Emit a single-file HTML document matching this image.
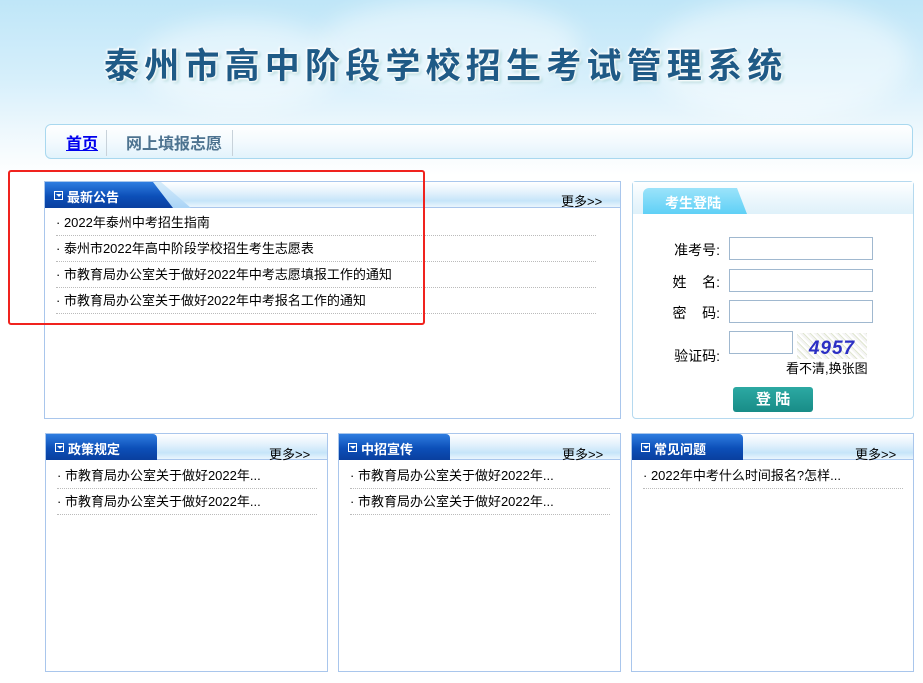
<!DOCTYPE html>
<html><head><meta charset="utf-8"><style>
*{margin:0;padding:0;box-sizing:border-box}
body{width:923px;height:683px;position:relative;overflow:hidden;background:#fff;font-family:"Liberation Sans","Noto Sans CJK SC",sans-serif;font-size:13px;color:#000}
.a{position:absolute}
#hd{left:0;top:0;width:923px;height:175px;background:linear-gradient(180deg,#bfe6f8 0%,#d6effb 45%,#eef8fd 75%,#fff 100%)}
.cl{border-radius:50%;background:rgba(255,255,255,.45);filter:blur(12px)}
#title{left:104px;top:38px;width:700px;font-size:35px;font-weight:bold;color:#1f5a86;letter-spacing:5.2px;white-space:nowrap;text-shadow:0 0 2px #fff,0 0 3px #fff,1px 1px 2px #fff,-1px -1px 2px #fff,2px 2px 3px #9cc}
#nav{left:45px;top:124px;width:868px;height:35px;border:1px solid #a9d8ef;border-radius:6px;background:linear-gradient(180deg,#fff 0%,#f3fafe 50%,#e2f3fc 100%)}
.panel{border:1px solid #a9c6ec;background:#fff}
.ph{left:0;top:0;right:0;height:26px;background:linear-gradient(180deg,#fff 0%,#e4f2fc 40%,#c6e5f9 75%,#eaf6fd 100%);border-bottom:1px solid #a9c6ec}
.tab{left:0;top:0;height:26px;background:linear-gradient(180deg,#2f7de0 0%,#0c4fb8 55%,#0a3f9e 100%);color:#fff;font-weight:bold;font-size:13px;line-height:32px;padding-left:22px}
.tab i{position:absolute;left:9px;top:9px;width:9px;height:9px;border:1px solid #fff;font-style:normal}
.tab i:after{content:"";position:absolute;left:1px;top:2px;border-left:3px solid transparent;border-right:3px solid transparent;border-top:3px solid #fff}
.more{top:9px;font-size:13px}
.it{left:11px;height:26px;line-height:26px;border-bottom:1px dotted #bbb;white-space:nowrap}
.lab{width:90px;text-align:right;font-size:14px}
.inp{left:729px;width:144px;height:23px;border:1px solid #a0b8cf;background:#fff}
</style></head><body>
<div id="hd" class="a">
<div class="a cl" style="left:320px;top:0;width:260px;height:90px"></div>
<div class="a cl" style="left:140px;top:20px;width:200px;height:90px"></div>
<div class="a cl" style="left:650px;top:0;width:260px;height:120px"></div>
</div>
<div id="title" class="a">泰州市高中阶段学校招生考试管理系统</div>
<div id="nav" class="a">
<div class="a" style="left:20px;top:5px;font-size:16px;font-weight:bold;color:#0000ee;text-decoration:underline">首页</div>
<div class="a" style="left:60px;top:5px;width:1px;height:26px;background:#c8d2da"></div>
<div class="a" style="left:80px;top:5px;font-size:16px;font-weight:bold;color:#4d7390">网上填报志愿</div>
<div class="a" style="left:186px;top:5px;width:1px;height:26px;background:#c8d2da"></div>
</div>

<div class="a panel" style="left:44px;top:181px;width:577px;height:238px">
<div class="a ph"></div>
<div class="a" style="left:0;top:0;width:146px;height:26px;background:linear-gradient(180deg,#d7ecfb,#a9d4f6);clip-path:polygon(0 0,116px 0,146px 26px,0 26px)"></div>
<div class="a tab" style="width:138px;clip-path:polygon(0 0,108px 0,128px 26px,0 26px)"><i></i>最新公告</div>
<div class="a more" style="left:516px">更多&gt;&gt;</div>
<div class="a it" style="top:28px;width:540px">· 2022年泰州中考招生指南</div>
<div class="a it" style="top:54px;width:540px">· 泰州市2022年高中阶段学校招生考生志愿表</div>
<div class="a it" style="top:80px;width:540px">· 市教育局办公室关于做好2022年中考志愿填报工作的通知</div>
<div class="a it" style="top:106px;width:540px">· 市教育局办公室关于做好2022年中考报名工作的通知</div>
</div>
<div class="a" style="left:8px;top:170px;width:417px;height:155px;border:2px solid #f0231e;border-radius:3px"></div>

<div class="a panel" style="left:632px;top:181px;width:282px;height:238px;border-color:#b5d9ef;border-radius:4px">
<div class="a" style="left:0;top:0;right:0;height:32px;background:linear-gradient(180deg,#fff 0%,#eaf6fc 60%,#dff1fa 100%)"></div>
<div class="a" style="left:10px;top:6px;width:104px;height:26px;background:linear-gradient(180deg,#9be3fa,#5fd0f6);border-radius:6px 8px 0 0;clip-path:polygon(0 0,94px 0,104px 26px,0 26px);color:#fff;font-weight:bold;font-size:14px;line-height:30px;padding-left:22px">考生登陆</div>
</div>
<div class="a lab" style="left:630px;top:240px">准考号:</div>
<div class="a lab" style="left:630px;top:272px">姓&nbsp;&nbsp;&nbsp;&nbsp;名:</div>
<div class="a lab" style="left:630px;top:303px">密&nbsp;&nbsp;&nbsp;&nbsp;码:</div>
<div class="a lab" style="left:630px;top:346px">验证码:</div>
<div class="a inp" style="top:237px"></div>
<div class="a inp" style="top:269px"></div>
<div class="a inp" style="top:300px"></div>
<div class="a inp" style="top:331px;width:64px"></div>
<div class="a" style="left:797px;top:333px;width:70px;height:26px;background:repeating-linear-gradient(45deg,#f4f4f4 0 2px,#e0e6d0 2px 3px,#fff 3px 5px);color:#2b2fc4;font-weight:bold;font-size:19px;line-height:32px;text-align:center;letter-spacing:1px;font-style:italic">4957</div>
<div class="a" style="left:786px;top:358px;font-size:13px">看不清,换张图</div>
<div class="a" style="left:733px;top:387px;width:80px;height:25px;border-radius:3px;background:linear-gradient(180deg,#2ca9a3,#188c87);color:#fff;font-weight:bold;font-size:15px;text-align:center;line-height:25px">登 陆</div>

<div class="a panel" style="left:45px;top:433px;width:283px;height:239px">
<div class="a ph"></div>
<div class="a tab" style="width:111px;border-radius:0 4px 0 0"><i></i>政策规定</div>
<div class="a more" style="left:223px;top:10px">更多&gt;&gt;</div>
<div class="a it" style="top:29px;width:260px">· 市教育局办公室关于做好2022年...</div>
<div class="a it" style="top:55px;width:260px">· 市教育局办公室关于做好2022年...</div>
</div>
<div class="a panel" style="left:338px;top:433px;width:283px;height:239px">
<div class="a ph"></div>
<div class="a tab" style="width:111px;border-radius:0 4px 0 0"><i></i>中招宣传</div>
<div class="a more" style="left:223px;top:10px">更多&gt;&gt;</div>
<div class="a it" style="top:29px;width:260px">· 市教育局办公室关于做好2022年...</div>
<div class="a it" style="top:55px;width:260px">· 市教育局办公室关于做好2022年...</div>
</div>
<div class="a panel" style="left:631px;top:433px;width:283px;height:239px">
<div class="a ph"></div>
<div class="a tab" style="width:111px;border-radius:0 4px 0 0"><i></i>常见问题</div>
<div class="a more" style="left:223px;top:10px">更多&gt;&gt;</div>
<div class="a it" style="top:29px;width:260px">· 2022年中考什么时间报名?怎样...</div>
</div>
</body></html>
